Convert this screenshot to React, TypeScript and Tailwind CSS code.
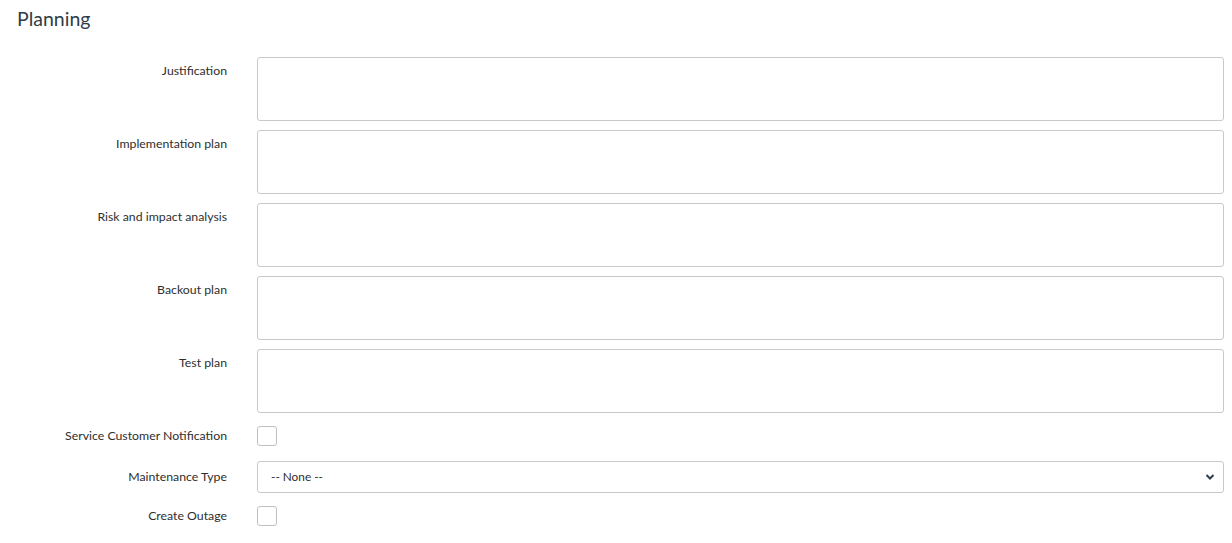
import React from "react";

const textRows = [
  "Justification",
  "Implementation plan",
  "Risk and impact analysis",
  "Backout plan",
  "Test plan",
];

function Label({ children }: { children: React.ReactNode }) {
  return (
    <div className="w-[227px] shrink-0 text-right text-[12.3px] leading-[18px] text-[#2e2e2e]">
      {children}
    </div>
  );
}

export default function App() {
  return (
    <div
      className="min-h-[543px] bg-white"
      style={{ fontFamily: "Lato, 'Liberation Sans', sans-serif" }}
    >
      <h2 className="pl-[17px] pt-[7px] text-[19.5px] leading-[24px] text-[#2e3d49]">Planning</h2>

      <div className="mt-[26px] flex flex-col">
        {textRows.map((label) => (
          <div key={label} className="mb-[9px] flex items-start">
            <div className="pt-[5px]">
              <Label>{label}</Label>
            </div>
            <textarea className="ml-[30px] h-[64px] w-[967px] resize-none rounded-[3px] border border-[#c9c9c9] bg-white outline-none" />
          </div>
        ))}

        <div className="mt-[4px] flex items-center">
          <Label>Service Customer Notification</Label>
          <div className="ml-[30px] h-[20px] w-[20px] rounded-[3px] border border-[#c0c0c0] bg-white" />
        </div>

        <div className="mt-[15px] flex items-center">
          <Label>Maintenance Type</Label>
          <div className="relative ml-[30px] flex h-[32px] w-[967px] items-center rounded-[3px] border border-[#c9c9c9] bg-white pl-[13px] text-[11.8px] text-[#2e2e2e]">
            -- None --
            <svg
              className="absolute right-[8px] top-[11px]"
              width="10"
              height="8"
              viewBox="0 0 10 8"
            >
              <path d="M1.5 2 L5 5.5 L8.5 2" fill="none" stroke="#2e3d49" strokeWidth="2" />
            </svg>
          </div>
        </div>

        <div className="mt-[13px] flex items-center">
          <Label>Create Outage</Label>
          <div className="ml-[30px] h-[20px] w-[20px] rounded-[3px] border border-[#c0c0c0] bg-white" />
        </div>
      </div>
    </div>
  );
}
